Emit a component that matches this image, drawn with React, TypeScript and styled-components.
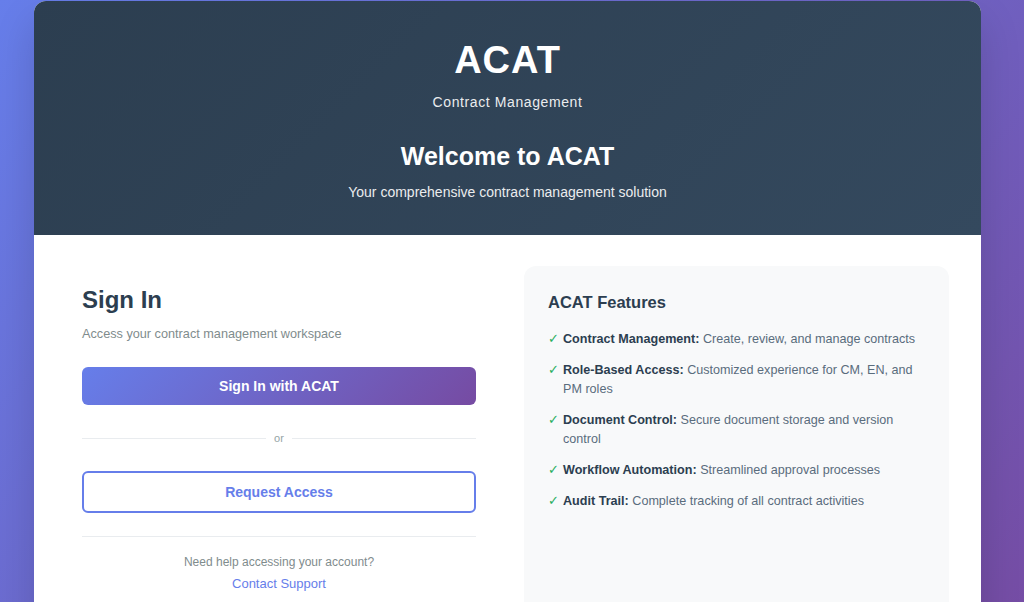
import React from 'react'
import styled, { createGlobalStyle } from 'styled-components'

const GlobalStyle = createGlobalStyle`
  html, body {
    margin: 0;
    padding: 0;
  }
  body {
    font-family: "Liberation Sans", Arial, sans-serif;
    background: linear-gradient(135deg, #667eea 0%, #764ba2 100%);
    min-height: 602px;
    overflow: hidden;
  }
`

const Page = styled.div`
  display: flex;
  justify-content: center;
  padding: 1px 43px 0 34px;
`

const Card = styled.div`
  width: 947px;
  background: #ffffff;
  border-radius: 12px;
  overflow: hidden;
  box-shadow: 0 20px 40px rgba(0, 0, 0, 0.15);
`

const Header = styled.header`
  background: linear-gradient(135deg, #2c3e50 0%, #34495e 100%);
  color: #ffffff;
  text-align: center;
  height: 234px;
  box-sizing: border-box;
  padding-top: 37px;
`

const Logo = styled.h1`
  margin: 0;
  font-size: 38px;
  line-height: 44px;
  font-weight: 700;
  letter-spacing: 1px;
`

const Tagline = styled.p`
  margin: 12px 0 0;
  font-size: 14px;
  line-height: 16px;
  letter-spacing: 0.6px;
  opacity: 0.9;
`

const Welcome = styled.h2`
  margin: 31px 0 0;
  font-size: 25px;
  line-height: 30px;
  font-weight: 700;
`

const WelcomeSub = styled.p`
  margin: 13px 0 0;
  font-size: 14px;
  line-height: 16px;
  opacity: 0.9;
`

const Body = styled.div`
  display: grid;
  grid-template-columns: 394px 425px;
  column-gap: 48px;
  padding: 31px 32px 0 48px;
`

const SignInColumn = styled.section`
  display: flex;
  flex-direction: column;
  padding-top: 19px;
`

const Title = styled.h3`
  margin: 0;
  font-size: 24px;
  line-height: 30px;
  font-weight: 700;
  color: #2c3e50;
`

const Subtitle = styled.p`
  margin: 11px 0 0;
  font-size: 12.7px;
  line-height: 16px;
  color: #7f8c8d;
`

const PrimaryButton = styled.button`
  margin-top: 25px;
  height: 38px;
  border: none;
  border-radius: 6px;
  background: linear-gradient(135deg, #667eea 0%, #764ba2 100%);
  color: #ffffff;
  font-family: inherit;
  font-size: 14px;
  font-weight: 700;
  cursor: pointer;
`

const Divider = styled.div`
  display: flex;
  align-items: center;
  gap: 8px;
  margin: 25px 0 0;
  color: #95a5a6;
  font-size: 11px;
  line-height: 16px;

  &::before,
  &::after {
    content: '';
    flex: 1;
    height: 1px;
    background: #e9ecef;
  }
`

const SecondaryButton = styled.button`
  margin-top: 25px;
  height: 42px;
  border: 2px solid #667eea;
  border-radius: 6px;
  background: #ffffff;
  color: #667eea;
  font-family: inherit;
  font-size: 14px;
  font-weight: 700;
  cursor: pointer;
`

const HelpBlock = styled.div`
  margin-top: 23px;
  border-top: 1px solid #e9ecef;
  padding-top: 17px;
  text-align: center;
`

const HelpText = styled.p`
  margin: 0;
  font-size: 12px;
  line-height: 16px;
  color: #7f8c8d;
`

const HelpLink = styled.a`
  display: inline-block;
  margin-top: 6px;
  font-size: 13px;
  line-height: 16px;
  color: #667eea;
  text-decoration: none;
`

const FeaturesBox = styled.aside`
  background: #f8f9fa;
  border-radius: 12px;
  padding: 25px 24px 0;
  height: 380px;
`

const FeaturesTitle = styled.h4`
  margin: 0;
  font-size: 16.5px;
  line-height: 22px;
  font-weight: 700;
  color: #2c3e50;
`

const FeatureList = styled.ul`
  list-style: none;
  margin: 17px 0 0;
  padding: 0;
  display: flex;
  flex-direction: column;
  gap: 12px;
`

const FeatureItem = styled.li`
  position: relative;
  padding-left: 15px;
  font-size: 12.6px;
  line-height: 19px;
  color: #5a6c7d;

  &::before {
    content: '✓';
    position: absolute;
    left: 0;
    top: 0;
    color: #27ae60;
  }
`

const Label = styled.strong`
  color: #2c3e50;
`

const features = [
  { label: 'Contract Management:', text: 'Create, review, and manage contracts' },
  { label: 'Role-Based Access:', text: 'Customized experience for CM, EN, and PM roles' },
  { label: 'Document Control:', text: 'Secure document storage and version control' },
  { label: 'Workflow Automation:', text: 'Streamlined approval processes' },
  { label: 'Audit Trail:', text: 'Complete tracking of all contract activities' },
]

const App: React.FC = () => (
  <>
    <GlobalStyle />
    <Page>
      <Card>
        <Header>
          <Logo>ACAT</Logo>
          <Tagline>Contract Management</Tagline>
          <Welcome>Welcome to ACAT</Welcome>
          <WelcomeSub>Your comprehensive contract management solution</WelcomeSub>
        </Header>
        <Body>
          <SignInColumn>
            <Title>Sign In</Title>
            <Subtitle>Access your contract management workspace</Subtitle>
            <PrimaryButton>Sign In with ACAT</PrimaryButton>
            <Divider>or</Divider>
            <SecondaryButton>Request Access</SecondaryButton>
            <HelpBlock>
              <HelpText>Need help accessing your account?</HelpText>
              <HelpLink href="#">Contact Support</HelpLink>
            </HelpBlock>
          </SignInColumn>
          <FeaturesBox>
            <FeaturesTitle>ACAT Features</FeaturesTitle>
            <FeatureList>
              {features.map((f) => (
                <FeatureItem key={f.label}>
                  <Label>{f.label}</Label> {f.text}
                </FeatureItem>
              ))}
            </FeatureList>
          </FeaturesBox>
        </Body>
      </Card>
    </Page>
  </>
)

export default App
